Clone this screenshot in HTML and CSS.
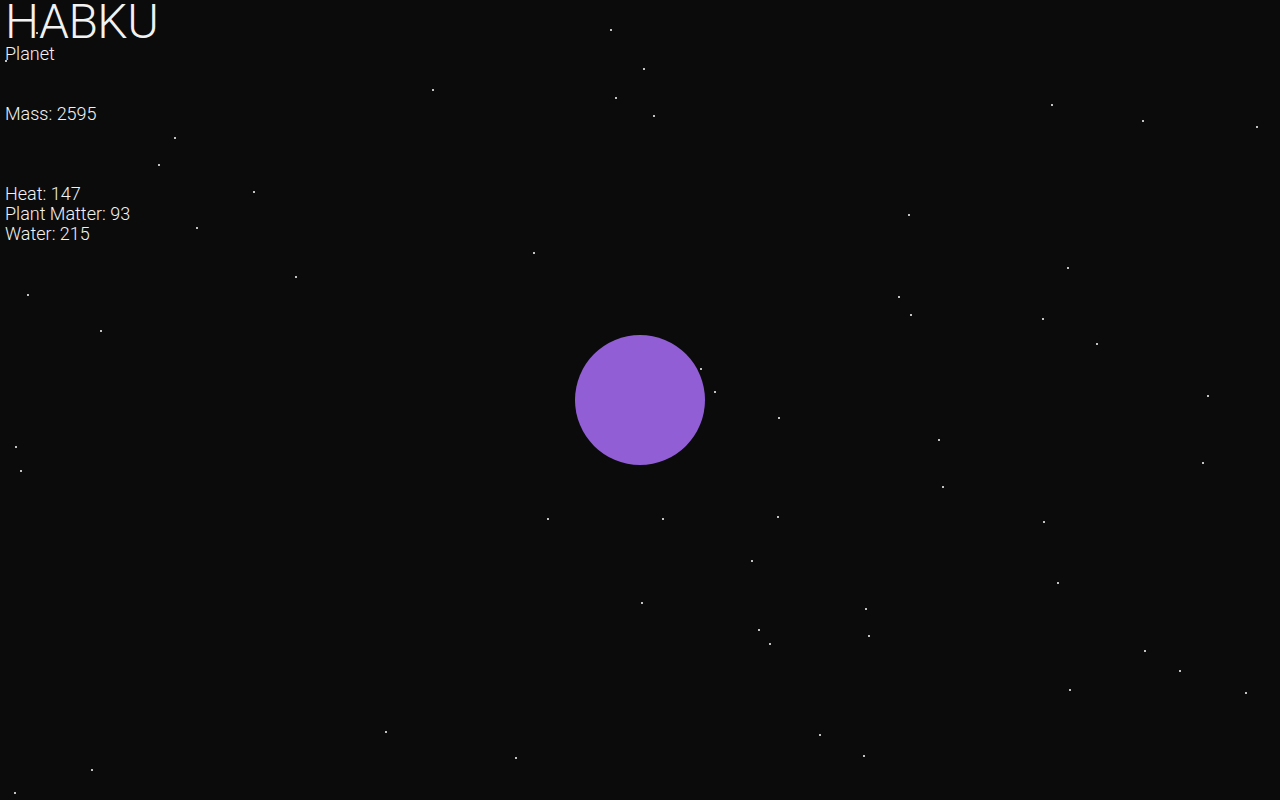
FILE: index.html
```html
<!DOCTYPE html>
<html>
<head>
<meta charset="utf-8">
<link rel="stylesheet" href="styles.css">
</head>
<body>
<div class="sky">
  <span class="star" style="left:611px;top:30px"></span>
  <span class="star" style="left:644px;top:69px"></span>
  <span class="star" style="left:433px;top:90px"></span>
  <span class="star" style="left:616px;top:98px"></span>
  <span class="star" style="left:654px;top:116px"></span>
  <span class="star" style="left:1052px;top:105px"></span>
  <span class="star" style="left:1143px;top:121px"></span>
  <span class="star" style="left:1257px;top:127px"></span>
  <span class="star" style="left:175px;top:138px"></span>
  <span class="star" style="left:159px;top:165px"></span>
  <span class="star" style="left:254px;top:192px"></span>
  <span class="star" style="left:909px;top:215px"></span>
  <span class="star" style="left:197px;top:228px"></span>
  <span class="star" style="left:534px;top:253px"></span>
  <span class="star" style="left:1068px;top:268px"></span>
  <span class="star" style="left:296px;top:277px"></span>
  <span class="star" style="left:28px;top:295px"></span>
  <span class="star" style="left:899px;top:297px"></span>
  <span class="star" style="left:911px;top:315px"></span>
  <span class="star" style="left:1043px;top:319px"></span>
  <span class="star" style="left:101px;top:331px"></span>
  <span class="star" style="left:1097px;top:344px"></span>
  <span class="star" style="left:701px;top:369px"></span>
  <span class="star" style="left:715px;top:392px"></span>
  <span class="star" style="left:1208px;top:396px"></span>
  <span class="star" style="left:779px;top:418px"></span>
  <span class="star" style="left:939px;top:440px"></span>
  <span class="star" style="left:16px;top:447px"></span>
  <span class="star" style="left:21px;top:471px"></span>
  <span class="star" style="left:1203px;top:463px"></span>
  <span class="star" style="left:943px;top:487px"></span>
  <span class="star" style="left:548px;top:519px"></span>
  <span class="star" style="left:663px;top:519px"></span>
  <span class="star" style="left:778px;top:517px"></span>
  <span class="star" style="left:1044px;top:522px"></span>
  <span class="star" style="left:752px;top:561px"></span>
  <span class="star" style="left:1058px;top:583px"></span>
  <span class="star" style="left:642px;top:603px"></span>
  <span class="star" style="left:866px;top:609px"></span>
  <span class="star" style="left:759px;top:630px"></span>
  <span class="star" style="left:869px;top:636px"></span>
  <span class="star" style="left:770px;top:644px"></span>
  <span class="star" style="left:1145px;top:651px"></span>
  <span class="star" style="left:1180px;top:671px"></span>
  <span class="star" style="left:1070px;top:690px"></span>
  <span class="star" style="left:1246px;top:693px"></span>
  <span class="star" style="left:386px;top:732px"></span>
  <span class="star" style="left:820px;top:735px"></span>
  <span class="star" style="left:516px;top:758px"></span>
  <span class="star" style="left:864px;top:756px"></span>
  <span class="star" style="left:92px;top:770px"></span>
  <span class="star" style="left:15px;top:793px"></span>
  <span class="star" style="left:37px;top:33px"></span>
  <span class="star" style="left:6px;top:61px"></span>
</div>
<div class="planet"></div>
<div class="info">
  <h1 class="name">HABKU</h1>
  <div class="line">Planet</div>
  <div class="line">&nbsp;</div>
  <div class="line">&nbsp;</div>
  <div class="line">Mass: 2595</div>
  <div class="line">&nbsp;</div>
  <div class="line">&nbsp;</div>
  <div class="line">&nbsp;</div>
  <div class="line">Heat: 147</div>
  <div class="line">Plant Matter: 93</div>
  <div class="line">Water: 215</div>
</div>
</body>
</html>
```
FILE: styles.css
```css
html, body {
  margin: 0;
  padding: 0;
  width: 1280px;
  height: 800px;
  overflow: hidden;
  background: #0b0b0b;
}
body {
  position: relative;
  font-family: Roboto, "Liberation Sans", sans-serif;
  color: #f2f2f2;
}
.sky {
  position: absolute;
  inset: 0;
}
.star {
  position: absolute;
  width: 2px;
  height: 2px;
  margin: -1px 0 0 -1px;
  background: #ffffff;
  border-radius: 1px;
}
.planet {
  position: absolute;
  left: 575px;
  top: 335px;
  width: 130px;
  height: 130px;
  border-radius: 50%;
  background: #925ed6;
}
.info {
  position: relative;
  padding: 0 0 0 5px;
}
.name {
  margin: 0;
  font-weight: 300;
  font-size: 48px;
  line-height: 44px;
  letter-spacing: -0.5px;
}
.line {
  font-weight: 300;
  font-size: 18px;
  line-height: 20px;
}
```
